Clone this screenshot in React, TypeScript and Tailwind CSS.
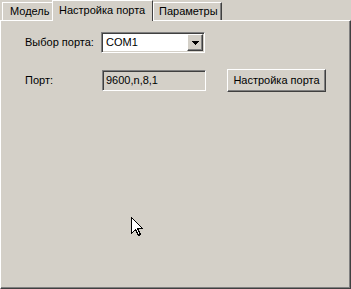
import React from 'react';

const raised = 'border-t border-l border-t-white border-l-white border-r border-b border-r-[#404040] border-b-[#404040] shadow-[inset_-1px_-1px_#808080]';
const sunken = 'border-t border-l border-t-[#808080] border-l-[#808080] border-r border-b border-r-white border-b-white shadow-[inset_1px_1px_#404040,inset_-1px_-1px_#d4d0c8]';

const Cursor = () => (
    <svg width="12" height="19" viewBox="0 0 12 19" shapeRendering="crispEdges">
        <path d="M0.5 0.5 L0.5 16.5 L4.5 12.5 L7.5 18.5 L9.5 17.5 L6.5 11.5 L11.5 11.5 Z" fill="#fff" stroke="#000" strokeWidth="1" />
    </svg>
);

export default function App() {
    return (
        <div className="relative w-[351px] h-[289px] bg-[#d4d0c8] flex flex-col text-[11px] leading-none text-black" style={{ fontFamily: '"Liberation Sans", Arial, sans-serif' }}>
            {/* Tabs */}
            <div className="flex items-end h-[20px] pl-[2px]">
                <div className="h-[18px] w-[50px] border-t border-l border-t-white border-l-white pl-[7px] flex items-center">
                    Модель
                </div>
                <div className="relative z-10 -mb-px h-[21px] w-[101px] bg-[#d4d0c8] border-t border-l border-t-white border-l-white border-r border-r-[#404040] pl-[6px] flex items-center pb-[2px]">
                    Настройка порта
                </div>
                <div className="h-[18px] w-[69px] border-t border-l border-t-white border-l-white border-r border-r-[#404040] shadow-[inset_-1px_0_#808080] pl-[5px] flex items-center">
                    Параметры
                </div>
            </div>

            {/* Panel */}
            <div className={`flex-1 ${raised} flex flex-col pt-[11px]`}>
                <div className="flex items-center h-[21px]">
                    <span className="w-[100px] pl-[24px]">Выбор порта:</span>
                    <div className={`w-[104px] h-[21px] bg-white ${sunken} flex items-center justify-between p-[1px]`}>
                        <span className="pl-[3px]">COM1</span>
                        <div className={`w-[16px] h-[17px] bg-[#d4d0c8] ${raised} flex items-center justify-center`}>
                            <svg width="7" height="4" viewBox="0 0 7 4" shapeRendering="crispEdges">
                                <path d="M0 0 H7 L3.5 4 Z" fill="#000" />
                            </svg>
                        </div>
                    </div>
                </div>
                <div className="flex items-center h-[23px] mt-[16px]">
                    <span className="w-[101px] pl-[24px]">Порт:</span>
                    <div className={`w-[104px] h-[21px] ${sunken} flex items-center pl-[3px]`}>
                        9600,n,8,1
                    </div>
                    <div className={`ml-[21px] w-[99px] h-[23px] ${raised} flex items-center justify-center`}>
                        Настройка порта
                    </div>
                </div>
            </div>

            <div className="absolute left-[131px] top-[217px]">
                <Cursor />
            </div>
        </div>
    );
}
